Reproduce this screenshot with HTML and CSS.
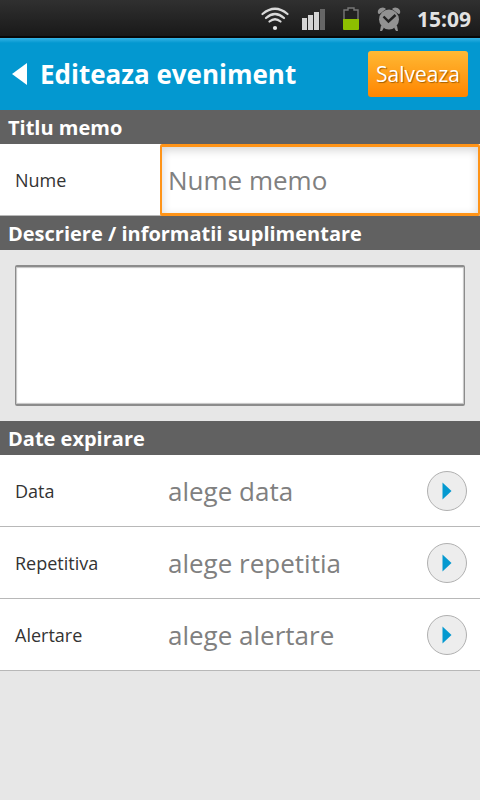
FILE: index.html
```html
<!DOCTYPE html>
<html lang="ro">
<head>
<meta charset="utf-8">
<meta name="viewport" content="width=device-width, initial-scale=1">
<title>Editeaza eveniment</title>
<link rel="stylesheet" href="styles.css">
</head>
<body>
<div class="status">
  <svg class="status-icon wifi" width="30" height="26" viewBox="0 0 30 26" fill="none" stroke="#d9d9d9" stroke-width="2.2" stroke-linecap="round" aria-hidden="true">
    <path d="M2.500 8Q15-2.500 27.500 8M6 12Q15 4 24 12M9.500 15.500Q15 11 20.500 15.500"/>
    <circle cx="15" cy="22" r="2.100" fill="#e6e6e6" stroke="none"/>
  </svg>
  <svg class="status-icon signal" width="24" height="26" viewBox="0 0 24 26" aria-hidden="true">
    <g fill="#d4d4d4"><path d="M0 12h5v12H0zM6 9h5v15H6zM12 6h5v18h-5z"/></g>
    <path d="M18 3h5v21h-5z" fill="#666"/>
  </svg>
  <svg class="status-icon battery" width="18" height="26" viewBox="0 0 18 26" aria-hidden="true">
    <path d="M2 13V4h4V2h6v2h4v9" fill="#222" stroke="#777" stroke-width="1.400"/>
    <path d="M1 13h16v10q0 1-1 1H2q-1 0-1-1z" fill="#8dbf00"/>
  </svg>
  <svg class="status-icon alarm" width="24" height="26" viewBox="0 0 24 26" aria-hidden="true">
    <g fill="#929292">
      <path d="M1 7.500Q0 3.500 3.500 2Q7 .500 9 3L2.500 8zM23 7.500q1-4-2.500-5.500Q17 .500 15 3l6.500 5z"/>
      <circle cx="12" cy="13.500" r="10"/>
      <path d="M4 19.500l3 2-2 3.500H3zM20 19.500l-3 2 2 3.500h2z"/>
    </g>
    <path d="M6.500 10.500l5 5L18.500 9" fill="none" stroke="#222" stroke-width="2.400"/>
  </svg>
  <time class="clock">15:09</time>
</div>

<header class="header">
  <a class="back" href="#" aria-label="Inapoi">
    <svg width="16" height="22" viewBox="0 0 16 22" aria-hidden="true"><path d="M0 11L15 0v22z" fill="#fff"/></svg>
  </a>
  <h1 class="title">Editeaza eveniment</h1>
  <button class="save" type="submit" form="event">Salveaza</button>
</header>

<form class="form" id="event">
  <h2 class="section"><span>Titlu memo</span></h2>
  <div class="row row-input">
    <label class="label" for="name">Nume</label>
    <input class="name" id="name" type="text" placeholder="Nume memo">
  </div>

  <h2 class="section"><label for="description">Descriere / informatii suplimentare</label></h2>
  <div class="description">
    <textarea class="textarea" id="description"></textarea>
  </div>

  <h2 class="section"><span>Date expirare</span></h2>
  <div class="row">
    <label class="label" for="date">Data</label>
    <button class="picker" id="date" type="button">
      <span>alege data</span>
      <svg class="arrow" width="40" height="40" viewBox="0 0 40 40" aria-hidden="true"><circle cx="20" cy="20" r="19.500" fill="#ededed" stroke="#b0b0b0"/><path d="M15.500 11.500v17L24.500 20z" fill="#0499d0"/></svg>
    </button>
  </div>
  <div class="row">
    <label class="label" for="repeat">Repetitiva</label>
    <button class="picker" id="repeat" type="button">
      <span>alege repetitia</span>
      <svg class="arrow" width="40" height="40" viewBox="0 0 40 40" aria-hidden="true"><circle cx="20" cy="20" r="19.500" fill="#ededed" stroke="#b0b0b0"/><path d="M15.500 11.500v17L24.500 20z" fill="#0499d0"/></svg>
    </button>
  </div>
  <div class="row">
    <label class="label" for="alert">Alertare</label>
    <button class="picker" id="alert" type="button">
      <span>alege alertare</span>
      <svg class="arrow" width="40" height="40" viewBox="0 0 40 40" aria-hidden="true"><circle cx="20" cy="20" r="19.500" fill="#ededed" stroke="#b0b0b0"/><path d="M15.500 11.500v17L24.500 20z" fill="#0499d0"/></svg>
    </button>
  </div>
</form>
</body>
</html>
```
FILE: styles.css
```css
* {
  box-sizing: border-box;
}

body {
  margin: 0;
  background: #e7e7e7;
  color: #333;
  font-family: "Open Sans", "Noto Sans", sans-serif;
}

button,
input,
textarea {
  margin: 0;
  font-family: inherit;
}

.status {
  display: flex;
  align-items: center;
  justify-content: flex-end;
  height: 38px;
  padding: 2px 9px 0 0;
  background: linear-gradient(#303030, #191919);
  border-bottom: 2px solid #080808;
}

.status-icon {
  flex: none;
}

.wifi {
  margin-right: 12px;
}

.signal {
  margin-right: 16px;
}

.battery {
  margin-right: 17px;
}

.alarm {
  margin-right: 16px;
}

.clock {
  color: #e2e2e2;
  font-size: 21px;
  font-weight: 700;
  line-height: 28px;
}

.header {
  display: flex;
  align-items: center;
  height: 72px;
  padding: 0 12px;
  background: linear-gradient(#35b3e5, #0398d0 5px);
}

.back {
  display: flex;
  margin-right: 12px;
}

.title {
  flex: 1;
  margin: 0;
  color: #fff;
  font-size: 26px;
  font-weight: 700;
  line-height: 36px;
}

.save {
  width: 100px;
  height: 46px;
  padding: 0;
  border: 0;
  border-radius: 3px;
  background: linear-gradient(#ffb934, #ff8500);
  color: #fff;
  font-size: 21px;
  line-height: 28px;
  text-shadow: 1px 1px 1px #a65f00;
}

.section {
  margin: 0;
  padding: 4px 8px 2px;
  background: #616161;
  color: #fff;
  font-size: 20px;
  font-weight: 700;
  line-height: 28px;
}

.row {
  display: grid;
  grid-template-columns: 1fr 2fr;
  align-items: center;
  height: 72px;
  border-bottom: 1px solid #b8b8b8;
  background: #fff;
}

.row-input .name {
  margin-bottom: -1px;
}

.label {
  padding-left: 15px;
  font-size: 18px;
  line-height: 24px;
}

.name {
  width: 100%;
  height: 72px;
  padding: 0 6px;
  border: 2px solid #ff9418;
  border-width: 3px 2px;
  border-radius: 2px;
  outline: 0;
  background: #fff;
  box-shadow: inset 0 3px 10px #d4d4d4;
  color: #333;
  font-size: 26px;
}

.name::placeholder {
  color: #808080;
  opacity: 1;
}

.description {
  padding: 15px;
}

.textarea {
  display: block;
  width: 100%;
  height: 141px;
  padding: 8px;
  border: 1px solid #8c8c8c;
  border-width: 2px 1px;
  border-radius: 2px;
  outline: 0;
  background: #fff;
  box-shadow: inset 0 0 1px 1px #c4c4c4;
  font-size: 26px;
  resize: none;
}

.picker {
  display: flex;
  align-items: center;
  justify-content: space-between;
  height: 71px;
  padding: 0 13px 0 8px;
  border: 0;
  background: transparent;
  color: #808080;
  font-size: 26px;
  line-height: 36px;
  text-align: left;
}
```
